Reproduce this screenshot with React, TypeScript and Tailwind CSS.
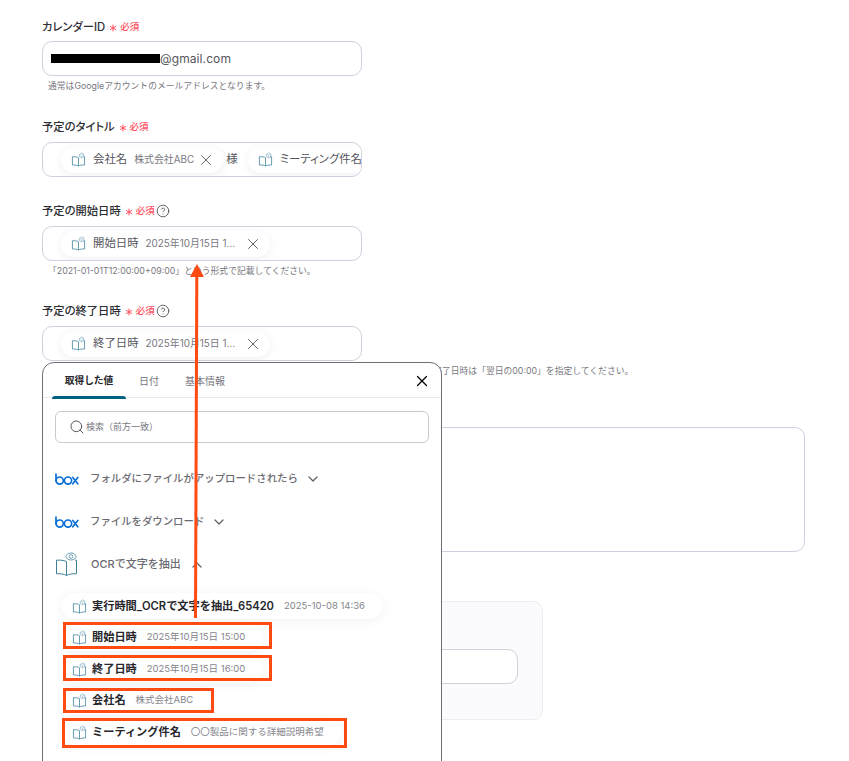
import React from 'react';
import { Asterisk, ChevronDown, ChevronUp, CircleHelp, Search, X } from 'lucide-react';

const fontStack = "font-['Inter','Noto_Sans_CJK_JP',sans-serif]";

const BookIcon: React.FC<{ className?: string }> = ({ className = 'w-[15px] h-[15px]' }) => (
  <svg viewBox="0 0 16 16" className={`${className} shrink-0`} fill="none" stroke="#4a8aa3" strokeWidth="0.9">
    <path d="M8 6.2C6.6 5.2 4.2 5 1.5 5v8.8c2.7 0 5.1.2 6.5 1.2 1.4-1 3.8-1.2 6.5-1.2V5c-.6 0-1.2 0-1.8.1" />
    <path d="M8 6.2V15" />
    <path d="M8.8 5V2.6L11.2 1l2.4 1v3l-2.4 1.2z" stroke="#9bbfcd" />
    <path d="M8.8 2.6l2.4 1 2.4-1.4M11.2 3.6v2.6" stroke="#9bbfcd" strokeWidth="0.7" />
  </svg>
);

const OcrIcon = () => (
  <svg viewBox="0 0 24 26" className="w-6 h-[26px] shrink-0" fill="none" stroke="#3f7f96" strokeWidth="1">
    <path d="M11.5 9.500C9 8.200 5 8 1.500 8.200v13.600c3.500-.2 7.500 0 10 1.700 2.500-1.700 6.500-1.900 10-1.700V8.200h-1.500" />
    <path d="M11.500 9.500v14" />
    <ellipse cx="16" cy="4.500" rx="5" ry="3.500" stroke="#6f9fb2" />
    <circle cx="16" cy="4.500" r="1.800" stroke="#6f9fb2" />
  </svg>
);

const BoxLogo = () => (
  <svg viewBox="0 0 24 12" className="w-6 h-3 shrink-0" fill="none" stroke="#0a6fd6" strokeWidth="1.7" strokeLinecap="round">
    <path d="M1 1v7" />
    <circle cx="4.700" cy="7.600" r="3.600" />
    <circle cx="13" cy="7.600" r="3.600" />
    <path d="M17.800 4.400l5 6.400M22.800 4.400l-5 6.400" />
  </svg>
);

const Required = () => (
  <span className="flex items-center ml-[2px] text-[#ff5061]">
    <Asterisk className="w-3 h-3 mt-[2px] mr-[1px]" strokeWidth={2} />
    <span className="text-[9.500px] leading-none">必須</span>
  </span>
);

const Label: React.FC<{ text: string; help?: boolean }> = ({ text, help }) => (
  <div className="flex items-center h-4 text-[11.300px] font-medium text-[#2d2d33] [font-feature-settings:'palt']">
    <span>{text}</span>
    <Required />
    {help && <CircleHelp className="w-[14px] h-[14px] ml-[1px] text-[#55555c]" strokeWidth={1.500} />}
  </div>
);

const Hint: React.FC<{ text: string; nowrap?: boolean }> = ({ text, nowrap }) => (
  <p className={`h-[14px] mt-[3px] ml-[6px] text-[8.800px] leading-[14px] text-[#77777e] ${nowrap ? 'whitespace-nowrap' : ''}`}>{text}</p>
);

const Token: React.FC<{ name: string; value?: string; closable?: boolean; valueWidth?: string }> = ({ name, value, closable, valueWidth = '' }) => (
  <div className="flex items-center h-[26px] shrink-0 pl-[10px] pr-[8px] bg-white rounded-full shadow-[0_2px_8px_rgba(90,80,130,0.09)]">
    <BookIcon />
    <span className="ml-[7px] text-[11.400px] text-[#55555c] whitespace-nowrap [font-feature-settings:'palt']">{name}</span>
    {value && <span className={`ml-[7px] text-[9.900px] text-[#77777e] whitespace-nowrap ${valueWidth}`}>{value}</span>}
    {closable && <X className="w-[18px] h-[18px] ml-[3px] text-[#55555c]" strokeWidth={1.200} />}
  </div>
);

const fieldBox = 'w-[320px] h-[35px] border border-[#cfd2de] rounded-[10px] bg-white flex items-center overflow-hidden';

const ResultItem: React.FC<{ name: string; value: string }> = ({ name, value }) => (
  <div className="flex items-center h-[26px] w-fit pl-[10px] pr-[18px] rounded-full bg-white shadow-[0_2px_10px_rgba(90,80,130,0.08)]">
    <BookIcon />
    <span className="ml-[5px] text-[11.200px] font-semibold text-[#26262b] whitespace-nowrap">{name}</span>
    <span className="ml-[10px] text-[9.500px] text-[#85858c] whitespace-nowrap">{value}</span>
  </div>
);

const SourceRow: React.FC<{ logo: React.ReactNode; text: string; open?: boolean }> = ({ logo, text, open }) => (
  <div className="flex items-center h-[43px] px-[12px]">
    <div className="w-6 flex justify-center">{logo}</div>
    <span className={`font-medium text-[#6a6a71] whitespace-nowrap ${open ? 'ml-[12px] text-[11px]' : 'ml-[11px] text-[10.400px]'}`}>{text}</span>
    {open
      ? <ChevronUp className="w-4 h-4 ml-[8px] text-[#5f5f66]" strokeWidth={1.800} />
      : <ChevronDown className="w-4 h-4 ml-[7px] text-[#5f5f66]" strokeWidth={1.800} />}
  </div>
);

const VariablePopover = () => (
  <div className="absolute left-[42px] top-[362px] w-[400px] h-[430px] bg-white border border-[#706f75] rounded-[12px]">
    <div className="relative flex items-center h-[35px] pl-[9px] border-b border-[#e9e9ee] text-[10px]">
      <div className="relative flex justify-center items-center w-[74px] h-[35px] pt-[2px] text-[9.700px] font-semibold text-[#26262b]">
        取得した値
        <span className="absolute left-0 right-0 bottom-[-1px] h-[3px] rounded-t-sm bg-[#00607f]" />
      </div>
      <span className="ml-[13px] pt-[2px] text-[#77777e]">日付</span>
      <span className="ml-[26px] pt-[2px] text-[#77777e]">基本情報</span>
      <X className="absolute right-[10px] top-[9px] w-[18px] h-[18px] text-black" strokeWidth={1.600} />
    </div>
    <div className="flex items-center h-8 mx-[12px] mt-[13px] pl-[13px] border border-[#c9c9cf] rounded-md">
      <Search className="w-4 h-4 text-[#55555c]" strokeWidth={1.500} />
      <span className="ml-[1px] text-[9px] text-[#77777e]">検索（前方一致）</span>
    </div>
    <div className="mt-[14px]">
      <SourceRow logo={<BoxLogo />} text="フォルダにファイルがアップロードされたら" />
      <SourceRow logo={<BoxLogo />} text="ファイルをダウンロード" />
      <SourceRow logo={<OcrIcon />} text="OCRで文字を抽出" open />
    </div>
    <div className="flex flex-col gap-[5.500px] mt-[7px] ml-[19px]">
      <ResultItem name="実行時間_OCRで文字を抽出_65420" value="2025-10-08 14:36" />
      <ResultItem name="開始日時" value="2025年10月15日 15:00" />
      <ResultItem name="終了日時" value="2025年10月15日 16:00" />
      <ResultItem name="会社名" value="株式会社ABC" />
      <ResultItem name="ミーティング件名" value="〇〇製品に関する詳細説明希望" />
    </div>
  </div>
);

const Annotations = () => (
  <>
    <svg viewBox="0 0 849 761" className="absolute left-0 top-0 w-[849px] h-[761px] pointer-events-none" fill="none">
      <path d="M195.500 618L196.800 276" stroke="#ff4a12" strokeWidth="3" />
      <path d="M197 264L204 277H190z" fill="#ff4a12" />
    </svg>
    <div className="absolute left-[63px] top-[622px] w-[209px] h-[27px] border-[3px] border-[#ff4a12]" />
    <div className="absolute left-[63px] top-[655px] w-[209px] h-[26px] border-[3px] border-[#ff4a12]" />
    <div className="absolute left-[63px] top-[688px] w-[151px] h-[25px] border-[3px] border-[#ff4a12]" />
    <div className="absolute left-[62px] top-[718px] w-[285px] h-[30px] border-[3px] border-[#ff4a12]" />
  </>
);

export default function App() {
  return (
    <div className={`relative w-[849px] h-[761px] overflow-hidden bg-white pl-[42px] pt-[19px] ${fontStack}`}>
      <Label text="カレンダーID" />
      <div className={`mt-[6px] pl-[8px] ${fieldBox}`}>
        <span className="w-[109px] h-[9px] bg-black" />
        <span className="text-[12px] tracking-[0.1px] text-[#55555c]">@gmail.com</span>
      </div>
      <Hint text="通常はGoogleアカウントのメールアドレスとなります。" />

      <div className="mt-[26px]">
        <Label text="予定のタイトル" />
      </div>
      <div className={`mt-[7px] pl-[18px] ${fieldBox}`}>
        <Token name="会社名" value="株式会社ABC" closable />
        <span className="ml-[3px] mr-[10px] text-[11.500px] text-[#55555c] shrink-0">様</span>
        <Token name="ミーティング件名" />
      </div>

      <div className="mt-[26px]">
        <Label text="予定の開始日時" help />
      </div>
      <div className={`mt-[7px] pl-[18px] ${fieldBox}`}>
        <Token name="開始日時" value="2025年10月15日 1..." closable valueWidth="w-[95px]" />
      </div>
      <Hint text="「2021-01-01T12:00:00+09:00」という形式で記載してください。" />

      <div className="mt-[25px]">
        <Label text="予定の終了日時" help />
      </div>
      <div className={`mt-[7px] pl-[18px] ${fieldBox}`}>
        <Token name="終了日時" value="2025年10月15日 1..." closable valueWidth="w-[95px]" />
      </div>
      <Hint nowrap text="終日予定としてカレンダーに登録したい場合は、開始日時は必ず「予定当日の00:00」を指定し、終了日時は「翌日の00:00」を指定してください。" />

      <div className="mt-[49px] w-[763px] h-[125px] border border-[#cfd2de] rounded-[10px] bg-white" />

      <div className="mt-[49px] w-[501px] h-[119px] flex items-center px-[24px] pt-[12px] border border-[#eeecf1] rounded-[10px] bg-[#fbfafc]">
        <div className="w-full h-[35px] border border-[#d2d0d8] rounded-[10px] bg-white" />
      </div>

      <VariablePopover />
      <Annotations />
    </div>
  );
}
